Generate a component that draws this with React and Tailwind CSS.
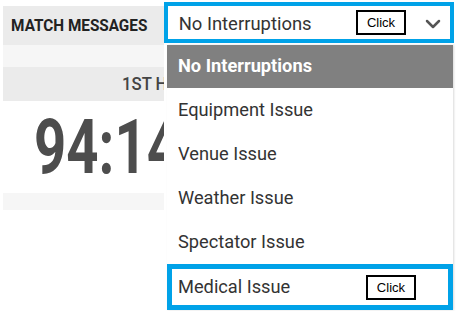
import React from "react";

const Chevron = () => (
  <svg width="24" height="24" viewBox="0 0 24 24" fill="none" stroke="#555" strokeWidth="2.5" strokeLinecap="round" strokeLinejoin="round">
    <path d="m6 9 6 6 6-6" />
  </svg>
);

const ClickTag = () => (
  <div className="flex h-[25px] w-[50px] items-center justify-center border-2 border-black bg-white text-[13px] leading-none text-black" style={{ fontFamily: '"Liberation Sans", Arial, sans-serif' }}>
    Click
  </div>
);

export default function App() {
  const items = ["Equipment Issue", "Venue Issue", "Weather Issue", "Spectator Issue"];
  return (
    <div className="relative h-[311px] w-[457px] overflow-hidden bg-white" style={{ fontFamily: 'Roboto, "Noto Sans", sans-serif' }}>
      <div className="flex w-[164px] flex-col overflow-hidden pl-[3px] pt-[6px]">
        <div className="flex h-[39px] items-center bg-[#ebebeb]">
          <span className="origin-left scale-x-[0.9] pl-[9px] text-[17px] font-bold whitespace-nowrap text-[#222]">MATCH MESSAGES</span>
        </div>
        <div className="h-[22px] bg-[#f6f6f6]" />
        <div className="flex h-[34px] items-center bg-[#ebebeb]">
          <span className="origin-left translate-x-[119px] scale-x-[0.88] text-[19px] font-medium whitespace-nowrap text-[#444]">1ST HALF</span>
        </div>
        <div className="flex h-[92px] items-center">
          <span className="origin-left translate-x-[31px] scale-x-[0.74] text-[76px] leading-none font-bold whitespace-nowrap text-[#4d4d4d]">94:14</span>
        </div>
        <div className="h-[17px] bg-[#f6f6f6]" />
      </div>

      <div className="absolute left-[164px] top-[2px] flex h-[41px] w-[290px] items-center border-4 border-[#00a2e8] bg-white">
        <span className="origin-left scale-x-[0.97] pl-[11px] pt-[3px] text-[19px] whitespace-nowrap text-[#333]">No Interruptions</span>
        <div className="ml-auto mr-[44px]"><ClickTag /></div>
        <div className="absolute right-[5px] top-[6px]"><Chevron /></div>
      </div>

      <div className="absolute left-[167px] top-[45px] flex w-[286px] flex-col bg-white shadow-[1px_0_2px_rgba(0,0,0,0.15)]">
        <div className="flex h-[43px] items-center bg-[#808080] pl-[11px]">
          <span className="origin-left scale-x-[0.96] text-[19px] font-bold whitespace-nowrap text-white">No Interruptions</span>
        </div>
        {items.map((t) => (
          <div key={t} className="flex h-[44px] items-center pl-[11px]">
            <span className="origin-left scale-x-[0.96] text-[19px] whitespace-nowrap text-[#333]">{t}</span>
          </div>
        ))}
        <div className="flex h-[46px] items-center border-[5px] border-[#00a2e8] pl-[6px]">
          <span className="origin-left scale-x-[0.96] text-[19px] whitespace-nowrap text-[#333]">Medical Issue</span>
          <div className="ml-[71px]"><ClickTag /></div>
        </div>
      </div>
    </div>
  );
}
